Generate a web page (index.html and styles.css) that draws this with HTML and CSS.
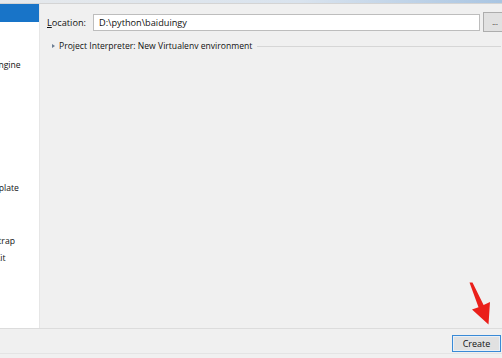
FILE: index.html
```html
<!DOCTYPE html>
<html lang="en">
<head>
    <meta charset="UTF-8">
    <title>New Project</title>
    <link rel="stylesheet" href="styles.css">
</head>
<body>
    <div class="window">
        <div class="titlebar"></div>
        <div class="content">
            <div class="types">
                <ul class="type-list">
                    <li class="selected">Pure Python</li>
                    <li>Django</li>
                    <li>Flask</li>
                    <li>Google App Engine</li>
                    <li>Pyramid</li>
                    <li>Web2Py</li>
                    <li>Scientific</li>
                    <li>Angular CLI</li>
                    <li>AngularJS</li>
                    <li>Foundation</li>
                    <li>HTML5 Boilerplate</li>
                    <li>React App</li>
                    <li>React Native</li>
                    <li>Twitter Bootstrap</li>
                    <li>Web Starter Kit</li>
                </ul>
            </div>
            <div class="settings">
                <div class="location-row">
                    <label for="location"><u>L</u>ocation:</label>
                    <input type="text" id="location" value="D:\python\baiduingy">
                    <button class="browse-btn">...</button>
                </div>
                <div class="interpreter">
                    <span class="toggle"></span>
                    <span>Project Interpreter: New Virtualenv environment</span>
                    <span class="rule"></span>
                </div>
            </div>
        </div>
        <div class="footer">
            <button class="create-btn">Create</button>
        </div>
        <svg class="pointer" width="502" height="358" viewBox="0 0 502 358">
            <polygon points="469.5,282.5 472.5,282.5 483.6,305 490,302 488.5,324.5 472,309.5 478.5,307.2" fill="#ea1f1a"/>
        </svg>
    </div>
</body>
</html>
```

FILE: styles.css
```css
body {
    margin: 0;
    background: #f0f0f0;
    font-family: "Open Sans", "Noto Sans", sans-serif;
    font-size: 8.6px;
    color: #111111;
}
.window {
    position: relative;
    width: 502px;
    height: 358px;
    overflow: hidden;
    display: flex;
    flex-direction: column;
}
.titlebar {
    height: 3px;
    background: linear-gradient(to right, #e6e9ec, #d9e3ee 60%, #a9c5e2);
    border-bottom: 1px solid #d4d4d4;
}
.content {
    display: flex;
    height: 324px;
    border-bottom: 1px solid #dcdcdc;
}
.types {
    width: 39px;
    background: #ffffff;
    border-right: 1px solid #e6e6e6;
    overflow: hidden;
    flex-shrink: 0;
}
.type-list {
    list-style: none;
    margin: 0 0 0 -55px;
    padding: 0;
    width: 94px;
}
.type-list li {
    height: 17.6px;
    line-height: 17.6px;
    white-space: nowrap;
}
.type-list li.selected {
    background: #1874c8;
    color: #ffffff;
}
.settings {
    flex: 1;
    padding: 8px 0 0 7px;
    display: flex;
    flex-direction: column;
}
.location-row {
    display: flex;
    align-items: center;
    height: 20px;
    font-size: 9.2px;
}
.location-row label {
    width: 46px;
    flex-shrink: 0;
}
.location-row input {
    width: 387px;
    height: 17px;
    flex-shrink: 0;
    box-sizing: border-box;
    border: 1px solid #bdbdbd;
    background: #ffffff;
    padding: 0 5px;
    font: inherit;
    color: #111111;
}
.browse-btn {
    margin-left: 3px;
    width: 24px;
    height: 20px;
    flex-shrink: 0;
    border: 1px solid #adadad;
    background: #e1e1e1;
    font: inherit;
    font-size: 7px;
    padding: 0;
}
.interpreter {
    display: flex;
    align-items: center;
    gap: 4px;
    margin-top: 8px;
    padding-left: 5px;
    padding-right: 6px;
}
.toggle {
    width: 0;
    height: 0;
    border-top: 2.5px solid transparent;
    border-bottom: 2.5px solid transparent;
    border-left: 3px solid #6b7d93;
}
.rule {
    flex: 1;
    height: 1px;
    background: #d6d6d6;
    margin-left: 1px;
}
.footer {
    flex: 1;
    display: flex;
    justify-content: flex-end;
    align-items: flex-start;
    padding: 6px 1px 0 0;
    border-bottom: 1px solid #e4e4e4;
    margin-bottom: 4px;
}
.create-btn {
    width: 49px;
    height: 17px;
    border: 1px solid #3a8ad6;
    box-shadow: inset 0 0 0 1px #e8f0f8;
    background: #e1e1e1;
    font: inherit;
    font-size: 9px;
    color: #111111;
    padding: 0;
}
.pointer {
    position: absolute;
    left: 0;
    top: 0;
    pointer-events: none;
}
```
